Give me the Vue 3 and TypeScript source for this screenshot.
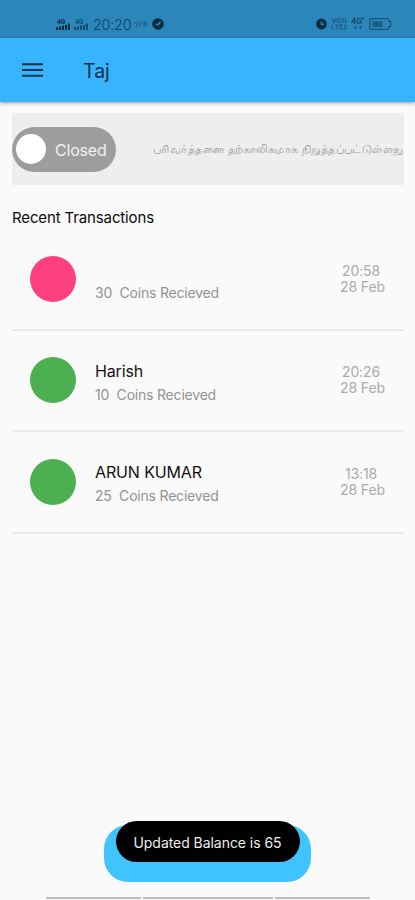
<script setup lang="ts">
interface Transaction {
  name: string
  coins: number
  time: string
  date: string
  tone: 'pink' | 'green'
}

const transactions: Transaction[] = [
  { name: '', coins: 30, time: '20:58', date: '28 Feb', tone: 'pink' },
  { name: 'Harish', coins: 10, time: '20:26', date: '28 Feb', tone: 'green' },
  { name: 'ARUN KUMAR', coins: 25, time: '13:18', date: '28 Feb', tone: 'green' },
]
</script>

<template>
  <div class="screen">
    <div class="status">
      <div class="status-left">
        <svg v-for="n in 2" :key="n" class="signal" :class="{ dim: n === 2 }" width="14" height="13" viewBox="0 0 14 13">
          <text x="1" y="5.6" font-size="6.5" font-weight="700">4G</text>
          <path d="M0 9h2v3H0zM3 8.5h2V12H3zM6 7.5h2V12H6zM9 7h2v5H9zM12 5.5h2V12h-2z" />
        </svg>
        <span class="clock">20:20</span>
        <svg class="activity" width="13" height="10" viewBox="0 0 13 10">
          <path d="M1 3v2M3 2v3l-1 3M5 2.5l1 2-1 3M8 2v4M10 5l2-3v6M9 6h4" fill="none" stroke="currentColor" />
        </svg>
        <svg class="badge" width="12" height="12" viewBox="0 0 12 12">
          <circle cx="6" cy="6" r="5.8" />
          <path d="M4 7.5L8.5 4M6 7l2.5-3" stroke="#2a84b8" stroke-width="1.5" fill="none" />
        </svg>
      </div>
      <div class="status-right">
        <svg width="11" height="12" viewBox="0 0 11 12">
          <circle cx="5.5" cy="6" r="5.4" />
          <path d="M5.5 3.5v3h2.3" fill="none" stroke="#2a84b8" stroke-width="1.6" />
        </svg>
        <svg class="net" width="16" height="14" viewBox="0 0 16 14">
          <path d="M1 1.5l2 4 2-4M8 1.5a2 2 0 1 0 .1 0M11.5 1q2 2.5 0 5M14 1q2 2.5 0 5M1 8v4h2.5M4 8h4M6 8v4.5M11.5 8H9v4h2.5M9 10h2M13 8.5q2-1 2 .5t-2 3h2.5" fill="none" stroke="currentColor" stroke-width="1.1" />
        </svg>
        <svg class="data" width="13" height="14" viewBox="0 0 13 14">
          <path d="M3.5 7V1L.5 5h4.3M10 2Q6 0 6 4t4 2V4H8M10.5 1.5H13M11.8.3v2.5" fill="none" stroke="currentColor" stroke-width="1.2" />
          <path d="M3 11.5l1.5-2.5L6 11.5zM8 9.500h3L9.5 12z" />
        </svg>
        <svg class="battery" width="23" height="12" viewBox="0 0 23 12">
          <path d="M2 .7h16q2 0 2 2v.8h1.6v5H20v.8q0 2-2 2H2Q.7 11.3.7 9.3V2.7Q.7.7 2 .7z" fill="none" stroke="currentColor" stroke-width="1.2" />
          <path d="M3 3h11v6H3z" opacity=".55" />
          <text x="5" y="8.6" font-size="7" font-weight="700">62</text>
        </svg>
      </div>
    </div>

    <header class="appbar">
      <svg class="menu" width="21" height="16" viewBox="0 0 21 16">
        <path d="M0 2.3h21M0 8h21M0 13.7h21" stroke="#07344d" stroke-width="2" />
      </svg>
      <h1>Taj</h1>
    </header>

    <main>
      <section class="notice">
        <div class="toggle"><i class="knob"></i><span>Closed</span></div>
        <svg class="tamil" width="251" height="20" viewBox="0 0 251 20">
          <text x="0" y="13.500" textLength="251" lengthAdjust="spacingAndGlyphs">பரிவர்த்தனை தற்காலிகமாக நிறுத்தப்பட்டுள்ளது</text>
        </svg>
      </section>

      <h2>Recent Transactions</h2>
      <ul>
        <li v-for="t in transactions" :key="t.time">
          <i class="avatar" :class="t.tone"></i>
          <div class="info">
            <strong>{{ t.name }}</strong>
            <span>{{ t.coins }}&nbsp; Coins Recieved</span>
          </div>
          <div class="when"><span>{{ t.time }}</span><span>{{ t.date }}</span></div>
        </li>
      </ul>
    </main>

    <footer>
      <div class="action">
        <div class="toast">Updated Balance is 65</div>
      </div>
      <div class="navhints"><i></i><i class="wide"></i><i></i></div>
    </footer>
  </div>
</template>

<style>
body { margin: 0; background: #fafafa; }
</style>

<style scoped>
.screen {
  height: 900px;
  display: flex;
  flex-direction: column;
  overflow: hidden;
  background: #fafafa;
  color: #0a0a0a;
  font-family: Inter, Roboto, sans-serif;
}
.status {
  box-sizing: border-box;
  height: 38px;
  flex: none;
  display: flex;
  justify-content: space-between;
  padding: 10px 23px 0 56px;
  background: #2b87bb;
  color: #113f5a;
}
.status svg { fill: currentColor; font-family: Roboto, sans-serif; }
.status-left, .status-right { display: flex; align-items: center; height: 28px; }
.signal { color: #0b2c40; margin-right: 4px; }
.signal.dim { opacity: .65; }
.clock { font-size: 14.5px; font-weight: 300; letter-spacing: -.3px; margin-left: 1px; }
.activity { margin-left: 3px; opacity: .6; }
.badge { margin-left: 5px; color: #0b2c40; }
.status-right > svg:first-child { color: #0b2c40; }
.net { margin-left: 4px; opacity: .6; }
.data { margin-left: 4px; opacity: .8; }
.battery { margin-left: 5px; opacity: .7; }
.appbar {
  height: 64px;
  flex: none;
  display: flex;
  align-items: center;
  padding-left: 22px;
  background: #38b4ff;
  box-shadow: 0 1px 4px rgba(0, 0, 0, .4);
}
h1 { margin: 2px 0 0 40px; font-size: 19.5px; line-height: 24px; font-weight: 400; color: #0a3049; }
main { padding: 11px 11px 0 12px; flex: 1; }
.notice {
  height: 72px;
  display: flex;
  align-items: center;
  justify-content: space-between;
  background: #eee;
}
.toggle {
  box-sizing: border-box;
  width: 104px;
  height: 45px;
  padding-left: 4px;
  display: flex;
  align-items: center;
  border-radius: 23px;
  background: #9d9d9d;
  color: #f1f1f1;
  font-size: 16px;
  letter-spacing: -.2px;
}
.toggle span { margin: 2px 0 0 9px; }
.knob { width: 30px; height: 30px; border-radius: 50%; background: #fff; }
.tamil { font-size: 11px; fill: #999; }
h2 { margin: 23px 0 0; font-size: 15px; line-height: 20px; font-weight: 400; letter-spacing: -.13px; }
ul { margin: 1px 0 0; padding: 0; list-style: none; }
li {
  box-sizing: border-box;
  height: 101.5px;
  display: flex;
  align-items: center;
  padding: 0 19px 0 18px;
  border-bottom: 2px solid #e9e9e9;
}
.avatar { width: 46px; height: 46px; border-radius: 50%; flex: none; }
.pink { background: #ff407f; }
.green { background: #4caf50; }
.info { margin: 5px 0 0 19px; flex: 1; font-size: 14px; letter-spacing: -.2px; color: #929292; }
.info strong { display: block; height: 24px; font-size: 16px; line-height: 23px; font-weight: 400; letter-spacing: -.13px; color: #111; }
.info span { display: block; line-height: 22px; }
.when { font-size: 14px; line-height: 16px; letter-spacing: -.1px; text-align: center; color: #aaa; }
.when span { display: block; }
.when span:first-child { padding-right: 3px; }
footer { flex: none; display: flex; flex-direction: column; align-items: center; }
.action {
  box-sizing: border-box;
  width: 207px;
  height: 57px;
  border-radius: 24px;
  background: #40c4ff;
}
.toast {
  width: 184px;
  height: 41px;
  margin: -4px auto 0;
  border-radius: 21px;
  background: #000;
  color: #eee;
  font-size: 14px;
  line-height: 43px;
  letter-spacing: -.05px;
  text-align: center;
  white-space: nowrap;
}
.navhints { display: flex; gap: 2px; margin: 15px 0 1px; }
.navhints i { width: 95px; height: 2px; background: #bdbdbd; }
.navhints .wide { width: 130px; }
</style>
